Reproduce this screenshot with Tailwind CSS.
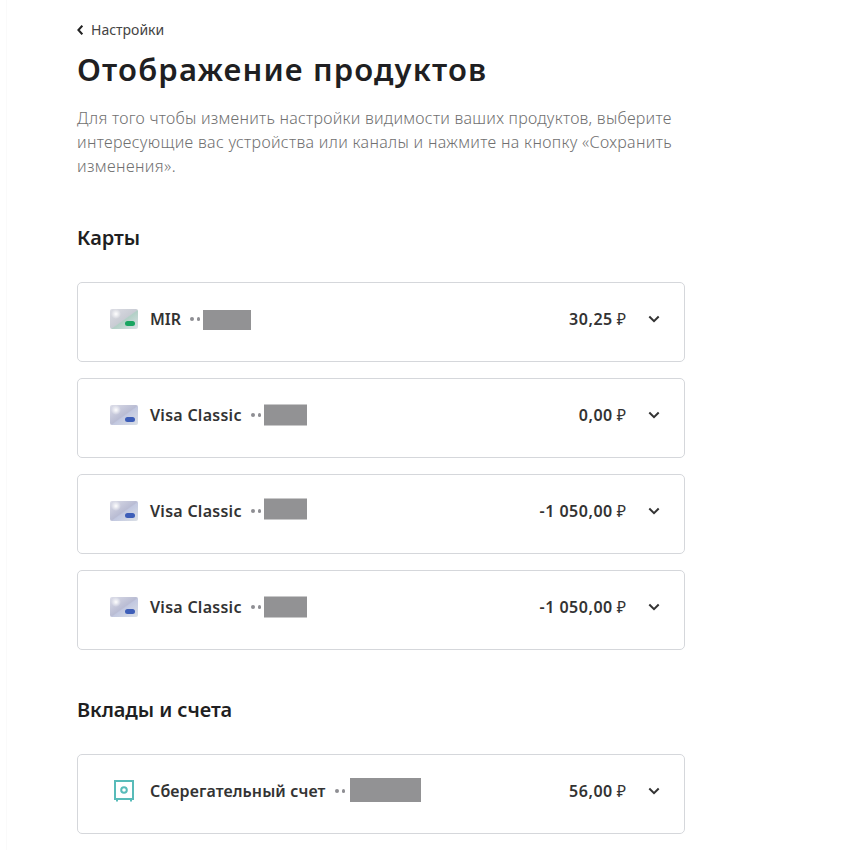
<!DOCTYPE html>
<html lang="ru">
<head>
    <meta charset="UTF-8">
    <meta name="viewport" content="width=device-width, initial-scale=1.0">
    <title>Отображение продуктов</title>
    <script src="https://cdn.jsdelivr.net/npm/@tailwindcss/browser@4"></script>
</head>
<body class="bg-white font-['Noto_Sans',sans-serif] text-[#1f1f22]">
    <div class="ml-1.5 h-[850px] overflow-hidden border-l border-[#fafafa] pl-[70px]">
        <main class="w-[608px] pt-5">
            <a href="#" class="flex h-5 items-center gap-2 text-sm text-[#444444]">
                <svg class="h-2.5 w-1.5" viewBox="0 0 6 10" fill="none" stroke="#222222" stroke-width="2"><path d="M5.3 0.7L1.4 5l3.9 4.3"/></svg>
                <span class="whitespace-nowrap">Настройки</span>
            </a>
            <h1 class="mt-[9px] h-10 whitespace-nowrap text-[31px]/10 font-semibold tracking-[1.15px]"><span>Отображение продуктов</span></h1>
            <p class="mt-[17px] whitespace-nowrap text-base/6 font-light text-[#707070]">
                <span class="tracking-[0.25px]">Для того чтобы изменить настройки видимости ваших продуктов, выберите</span><br>
                <span class="tracking-[0.32px]">интересующие вас устройства или каналы и нажмите на кнопку «Сохранить</span><br>
                <span class="tracking-[0.4px]">изменения».</span>
            </p>

            <!-- Карты -->
            <h2 class="mt-12 h-6 text-xl/6 font-semibold"><span>Карты</span></h2>
            <div id="cards" class="mt-8 flex flex-col gap-4"></div>

            <!-- Вклады и счета -->
            <h2 class="mt-12 h-6 text-xl/6 font-semibold tracking-[-0.08px]"><span>Вклады и счета</span></h2>
            <div id="accounts" class="mt-8 flex flex-col gap-4"></div>
        </main>
    </div>

    <script>
        const cards = [
            { name: 'MIR', icon: 'mir', amount: '30,25', nameWidth: 31, spacing: 0, mask: [48, 20, 1] },
            { name: 'Visa Classic', icon: 'visa', amount: '0,00', nameWidth: 92, spacing: 0.27, mask: [43, 21, -0.5] },
            { name: 'Visa Classic', icon: 'visa', amount: '-1 050,00', nameWidth: 92, spacing: 0.27, mask: [43, 21, -2.5] },
            { name: 'Visa Classic', icon: 'visa', amount: '-1 050,00', nameWidth: 92, spacing: 0.27, mask: [43, 21, -0.5] },
        ];
        const accounts = [
            { name: 'Сберегательный счет', icon: 'safe', amount: '56,00', nameWidth: 176, spacing: 0.1, mask: [71, 24, -1] },
        ];

        function cardIcon(id, start, middle, end, badge) {
            return `
                <svg class="h-5 w-7" viewBox="0 0 28 20">
                    <defs>
                        <linearGradient id="${id}" x1="0" y1="0" x2="1" y2="1">
                            <stop offset="0" stop-color="${start}"/>
                            <stop offset="0.5" stop-color="${middle}"/>
                            <stop offset="0.54" stop-color="${end}"/>
                            <stop offset="1" stop-color="#dbe0e6"/>
                        </linearGradient>
                        <radialGradient id="${id}-glow">
                            <stop offset="0" stop-color="#ffffff"/>
                            <stop offset="0.4" stop-color="#ffffff" stop-opacity="0.6"/>
                            <stop offset="1" stop-color="#ffffff" stop-opacity="0"/>
                        </radialGradient>
                    </defs>
                    <rect width="28" height="20" rx="2" fill="url(#${id})"/>
                    <circle cx="6" cy="5" r="5" fill="url(#${id}-glow)"/>
                    <rect x="15" y="12" width="10" height="5" rx="2.5" fill="${badge}"/>
                </svg>`;
        }

        function productIcon(type, id) {
            if (type === 'mir') return cardIcon(id, '#dcdde4', '#c9ccd4', '#b2d0c6', '#18a561');
            if (type === 'visa') return cardIcon(id, '#dcdde8', '#b9bcd3', '#c2c8e0', '#3d5eb8');
            return `
                <svg class="h-6 w-7" viewBox="0 0 28 24" fill="none" stroke="#58bbb9" stroke-width="2">
                    <rect x="5" y="2" width="18" height="18"/>
                    <circle cx="14" cy="11" r="2.8"/>
                    <path d="M7 20v2.5M21 20v2.5"/>
                </svg>`;
        }

        function productRow(item, id) {
            const [width, height, shift] = item.mask;
            return `
                <div class="flex h-20 items-start rounded-[5px] border border-[#d5d7db] pt-6 pr-[22px] pl-8">
                    <div class="flex h-6 w-7 items-center">${productIcon(item.icon, id)}</div>
                    <span class="ml-3 shrink-0 whitespace-nowrap text-base/6 font-semibold text-[#333333]" style="width: ${item.nameWidth}px; letter-spacing: ${item.spacing}px"><span>${item.name}</span></span>
                    <div class="ml-[9px] flex h-6 items-center gap-[3px]">
                        <i class="size-[3.5px] rounded-full bg-[#8e8e93]"></i>
                        <i class="size-[3.5px] rounded-full bg-[#8e8e93]"></i>
                    </div>
                    <div class="${item.icon === 'safe' ? 'ml-[5px]' : 'ml-[3px]'} flex h-6 items-center">
                        <div class="bg-[#929294]" style="width: ${width}px; height: ${height}px; transform: translateY(${shift}px)"></div>
                    </div>
                    <div class="ml-auto flex h-6 items-center whitespace-nowrap text-base/6 font-semibold text-[#333333]">
                        <span class="tracking-[0.5px]">${item.amount}</span>
                        <span class="ml-1 text-base/6 font-normal">₽</span>
                        <svg class="ml-5 h-3 w-4" viewBox="0 0 16 12" fill="none" stroke="#333333" stroke-width="2"><path d="M3.3 3.5L8 8.2l4.7-4.7"/></svg>
                    </div>
                </div>`;
        }

        document.getElementById('cards').innerHTML = cards.map((item, i) => productRow(item, `card-${i}`)).join('');
        document.getElementById('accounts').innerHTML = accounts.map((item, i) => productRow(item, `account-${i}`)).join('');
    </script>
</body>
</html>
